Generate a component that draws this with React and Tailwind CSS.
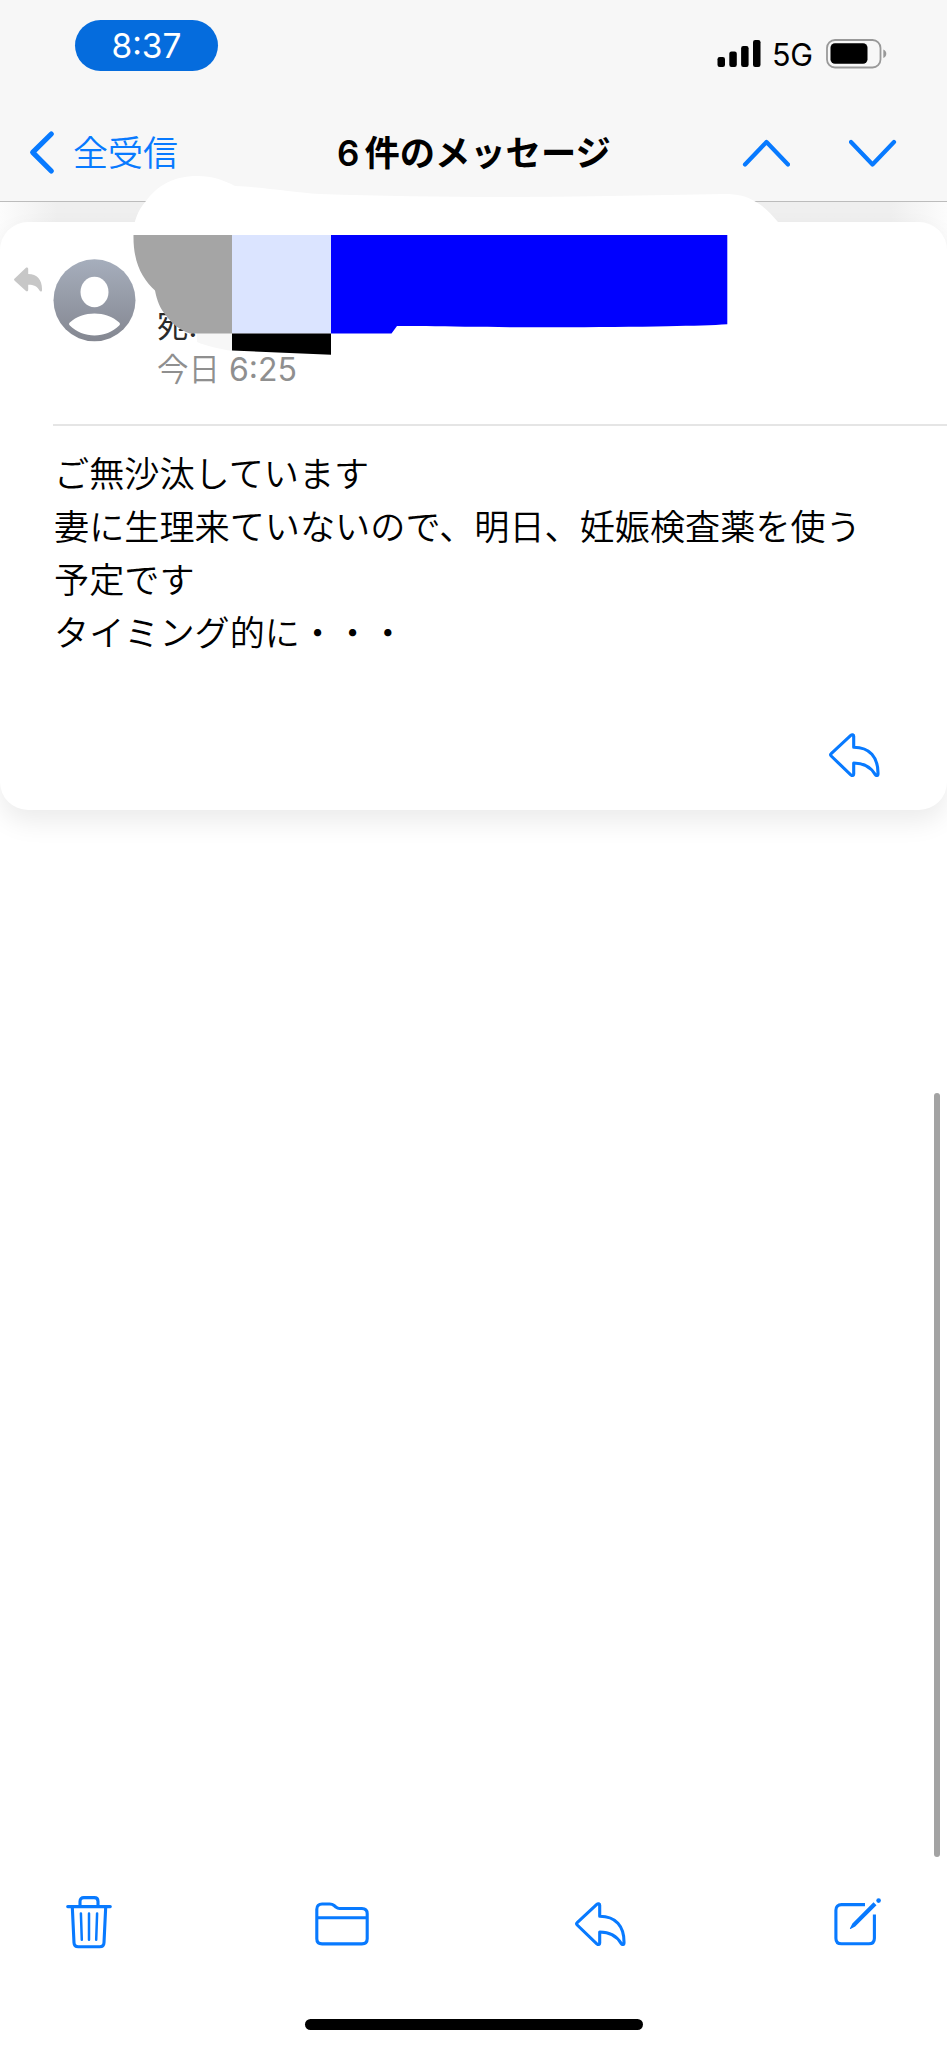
const bodyLines = [
  'ご無沙汰しています',
  '妻に生理来ていないので、明日、妊娠検査薬を使う',
  '予定です',
  'タイミング的に・・・',
];

function ReplyIcon() {
  return (
    <svg className="h-[44px] w-[51px]" viewBox="0 0 51 44" fill="none" stroke="currentColor" strokeWidth="3.1" strokeLinejoin="round">
      <path d="M2.2 20.6 21.8 2.4c1.3-1.2 2.9-.8 2.9.9v11C40.5 14.3 49.4 24 49 41.2c0 1.6-1.8 1.8-2.7.4C41.4 33.4 35 30 24.7 30v11c0 1.7-1.6 2.1-2.9.9L2.2 23c-.9-.9-.9-1.6 0-2.4Z" />
    </svg>
  );
}

function TrashIcon() {
  return (
    <svg className="h-[54px] w-[46px]" viewBox="0 0 46 54" fill="none" stroke="currentColor" strokeWidth="3.1" strokeLinecap="round" strokeLinejoin="round">
      <path d="M1.7 11.6h42.6M14 11.3V6.4c0-2.3 1.5-3.8 3.8-3.8h10.4c2.3 0 3.8 1.5 3.8 3.8v4.9" />
      <path d="M6.3 12 8 47.6c.1 2.6 1.8 4.1 4.3 4.1h21.4c2.5 0 4.2-1.5 4.3-4.1L39.7 12" />
      <path strokeWidth="2.5" d="m14.9 18.4.9 26.4M23 18.4v26.4M31.1 18.4l-.9 26.4" />
    </svg>
  );
}

function FolderIcon() {
  return (
    <svg className="h-[44px] w-[54px]" viewBox="0 0 54 44" fill="none" stroke="currentColor" strokeWidth="3.1" strokeLinejoin="round">
      <path d="M1.8 15.8h50.4M1.8 7.2c0-3.5 1.9-5.2 5.3-5.2h7.6c1.9 0 3.1.4 4.4 1.5l2 1.7c1 .9 1.9 1.3 3.5 1.3h22.3c3.4 0 5.3 1.8 5.3 5.2v25.1c0 3.4-1.9 5.1-5.3 5.1H7.1c-3.4 0-5.3-1.7-5.3-5.1Z" />
    </svg>
  );
}

function ComposeIcon() {
  return (
    <svg className="h-[48px] w-[48px]" viewBox="0 0 48 48" fill="none" stroke="currentColor" strokeWidth="3.1">
      <path d="M31 6.6H7.500c-3.600 0-5.600 2-5.600 5.600v28c0 3.600 2 5.600 5.600 5.600h27.300c3.600 0 5.600-2 5.600-5.600V16.500" />
      <path fill="currentColor" stroke="none" d="m39.500 4.200 3 3-21.300 21.300-4.200 2.300c-.9.5-1.400 0-.9-.9l2.300-4.300Z" />
      <circle cx="44.600" cy="2.600" r="2.300" fill="currentColor" stroke="none" />
    </svg>
  );
}

function StatusBar() {
  return (
    <div className="flex h-[92px] items-start justify-between pl-[75px] pr-[59px] pt-[20px] font-['Inter',sans-serif]">
      <div className="flex h-[51px] w-[143px] items-center justify-center rounded-[26px] bg-[#056cdd] pt-[2px] text-[33.5px] font-normal leading-none text-white">
        8:37
      </div>
      <div className="flex pt-[19px] text-black">
        <svg className="h-[29px] w-[44px]" viewBox="0 0 44 29" fill="currentColor">
          <rect x="0.5" y="18" width="7.5" height="10" rx="2.2" />
          <rect x="12.3" y="12.5" width="7.5" height="15.5" rx="2.2" />
          <rect x="24.1" y="7" width="7.5" height="21" rx="2.2" />
          <rect x="36" y="1" width="7.5" height="27" rx="2.2" />
        </svg>
        <span className="ml-[11px] w-[43px] pt-[1px] text-[30.5px] font-normal leading-[30px] tracking-[-0.2px]">5G</span>
        <svg className="ml-[11px] h-[30px] w-[62px]" viewBox="0 0 62 30">
          <rect x="1" y="1" width="53.5" height="27.5" rx="8" fill="none" stroke="#999" strokeWidth="1.8" />
          <rect x="4.5" y="4.3" width="37" height="20.5" rx="4.5" />
          <path fill="#999" d="M57.3 10.5c4 1.2 4 7.3 0 8.5Z" />
        </svg>
      </div>
    </div>
  );
}

function NavBar() {
  return (
    <div className="flex h-[109px] items-start pl-[29px] pr-[50px] pt-[34px]">
      <div className="flex w-[308px] items-start text-[#087aff]">
        <svg className="h-[52px] w-[26px]" viewBox="0 0 26 52" fill="none" stroke="currentColor" strokeWidth="5.2" strokeLinecap="round" strokeLinejoin="round">
          <path d="M22.3 8 3.7 26.4 22.3 45" />
        </svg>
        <span className="-mt-px ml-[18px] text-[35px] font-[350] leading-[52px]">全受信</span>
      </div>
      <h1 className="-mt-px w-[405px] whitespace-nowrap text-[35.3px] font-bold leading-[52px] text-black">
        <span className="mr-[5px] inline-block font-['Inter',sans-serif] text-[35px] font-semibold leading-none">6</span>件のメッセージ
      </h1>
      <div className="flex gap-[59px] pt-[13px] text-[#087aff]">
        <svg className="h-[28px] w-[48px]" viewBox="0 0 48 28" fill="none" stroke="currentColor" strokeWidth="4.2" strokeLinecap="round" strokeLinejoin="round">
          <path d="M3 25.5 24.5 3 46 25.5" />
        </svg>
        <svg className="h-[28px] w-[48px]" viewBox="0 0 48 28" fill="none" stroke="currentColor" strokeWidth="4.2" strokeLinecap="round" strokeLinejoin="round">
          <path d="M2 3 23.5 25.5 45 3" />
        </svg>
      </div>
    </div>
  );
}

// Hand-painted mask that hides the sender's name
function RedactionMask() {
  return (
    <svg className="absolute left-[130px] top-[170px] h-[190px] w-[660px]" viewBox="130 170 660 190">
      <path fill="#fff" d="M133 236c0-14 5-26 13-35 12-16 28-25 51-25 16 0 26 4 38 10 29 1 54 6 85 8 90 3 190 4 290 2l115-2c12 0 22 2 31 8 9 5 16 13 22 20 5 7 10 9 12 14Z" />
      <path fill="#f7f7f7" d="M197 333h35v18c-12-2-26-5-35-9Z" />
      <path fill="#a5a5a5" d="M133.5 235H232v98.5h-42c-10-3-18-10-24-18-6-7-9-15-11-25-12-11-22-27-21.5-55.5Z" />
      <path fill="#dbe4ff" d="M232 235h99v98.5h-99Z" />
      <path fill="#00f" d="M331 235h396.3v89.3c-14 1-34 1.5-60 2-64 1.4-178 1.4-241-.3H397l-5.5 7.5H331Z" />
      <path d="M232 333.5h99v21.2l-99-4.2Z" />
    </svg>
  );
}

function MessageCard() {
  return (
    <section className="relative">
      {/* Shade between the header and the card */}
      <div className="absolute inset-x-0 top-0 h-[48px] bg-linear-to-r from-[#fcfcfc] via-[#efefef] via-[6%] to-[#efefef]" />
      <div className="absolute right-0 top-0 h-[48px] w-[56px] bg-linear-to-r from-[#efefef] to-[#fcfcfc]" />
      <div className="relative pt-[20px]">
        <article className="flex h-[588px] flex-col rounded-[28px] bg-white shadow-[0_12px_26px_rgba(0,0,0,0.08)]">
          <div className="flex h-[202px] items-start pl-[14px]">
            <svg className="mt-[45px] h-[26px] w-[29px] text-[#c7c7c7]" viewBox="0 0 29 26" fill="currentColor">
              <path d="M.7 11.5 11.7 1.1c1-.9 2.5-.5 2.5 1V7C23.5 7 28.5 13.5 28 23.2c0 1.7-1.7 1.8-2.5.4C23 19.2 20 17.8 14.2 17.8v5c0 1.6-1.5 2-2.5 1L.7 13.700c-.9-.9-.9-1.400 0-2.200Z" />
            </svg>
            <svg className="ml-[10px] mt-[37px] h-[83px] w-[83px]" viewBox="0 0 83 83">
              <defs>
                <linearGradient id="avatar" x1="0" y1="0" x2="0" y2="1">
                  <stop offset="0" stopColor="#a6aebc" />
                  <stop offset="1" stopColor="#848791" />
                </linearGradient>
              </defs>
              <circle cx="41.5" cy="41.3" r="41" fill="url(#avatar)" />
              <ellipse cx="41.5" cy="33" rx="14" ry="15.3" fill="#fff" />
              <path fill="#fff" d="M16.8 66.5c-1-1-1-1.9 0-3 13-12 36.4-12 49.4 0 1 1.1 1 2 0 3-13 13.3-36.4 13.3-49.4 0Z" />
            </svg>
            <div className="ml-[21px] mt-[80px] text-[31.5px]">
              <p className="h-[43px] whitespace-nowrap leading-[43px] text-[#2b2b2b]">宛.</p>
              <p className="h-[44px] whitespace-nowrap font-[350] leading-[44px] text-[#8f8f8f]">
                今日<span className="font-['Inter',sans-serif] text-[32px] font-normal"> 6:25</span>
              </p>
            </div>
          </div>
          <div className="ml-[53px] border-t-2 border-[#e5e5e5]" />
          <div className="ml-[54px] pt-[19px] text-[35.15px] font-[350] leading-[53px] text-black">
            {bodyLines.map((line) => (
              <p key={line} className="whitespace-nowrap">{line}</p>
            ))}
          </div>
          <div className="mt-auto flex justify-end pb-[33px] pr-[67px] text-[#087aff]">
            <ReplyIcon />
          </div>
        </article>
      </div>
    </section>
  );
}

export default function App() {
  return (
    <div className="relative flex h-[2048px] w-[947px] flex-col overflow-hidden bg-white font-['Noto_Sans_CJK_JP',sans-serif]">
      <header className="border-b border-[#bcbcbc] bg-[#f7f7f7]">
        <StatusBar />
        <NavBar />
      </header>

      <main className="flex-1">
        <MessageCard />
      </main>

      <nav className="flex h-[153px] items-start pl-[66px] text-[#087aff]">
        <TrashIcon />
        <div className="ml-[203px] pt-[7px]"><FolderIcon /></div>
        <div className="ml-[206px] pt-[7px]"><ReplyIcon /></div>
        <div className="ml-[208px] pt-[3px]"><ComposeIcon /></div>
      </nav>

      <RedactionMask />
      <div className="absolute right-[7px] top-[1093px] h-[764px] w-[6px] rounded-full bg-[#a3a3a3]" />
      <div className="absolute bottom-[18px] left-[305px] h-[11px] w-[338px] rounded-full bg-black" />
    </div>
  );
}
